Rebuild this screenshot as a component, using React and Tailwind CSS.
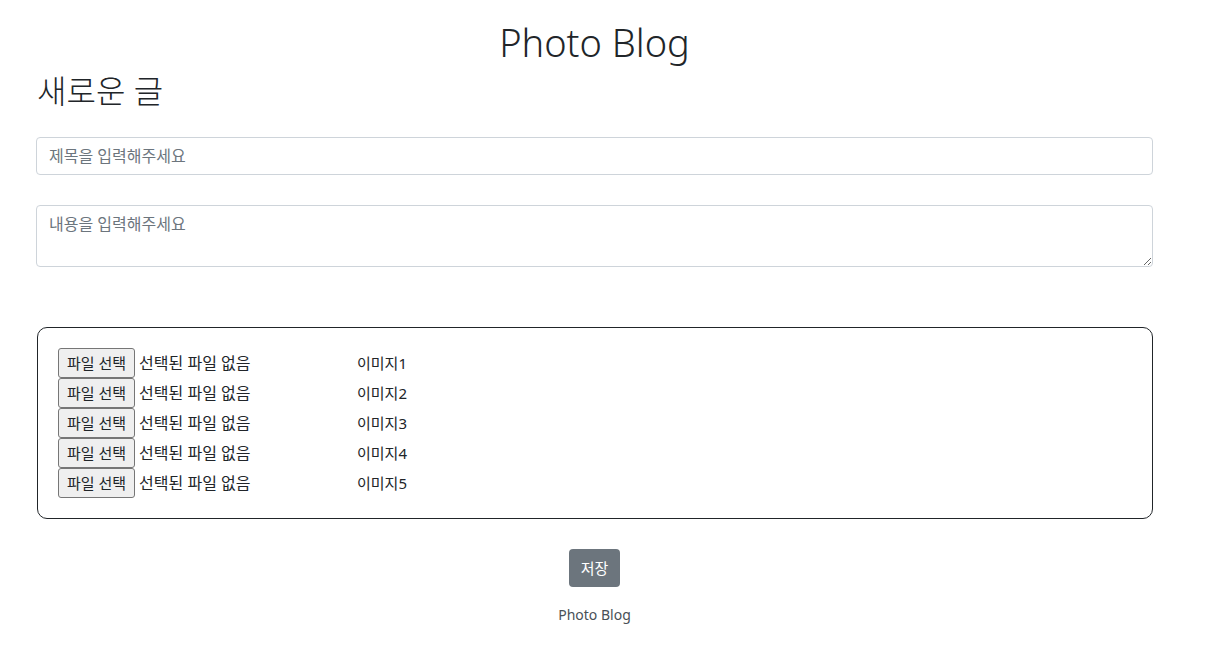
import React from 'react';

function FileRow({ label }) {
	return (
		<div className="flex items-center h-[30px]">
			<div className="w-[299px] flex items-center shrink-0">
				<button className="h-[30px] px-[8px] border border-[#767676] rounded-[3px] bg-[#efefef] text-[15px] text-[#212529]">
					파일 선택
				</button>
				<span className="ml-[4px] text-[16px] text-[#212529]">선택된 파일 없음</span>
			</div>
			<span className="text-[15px] text-[#212529]">{label}</span>
		</div>
	);
}

export default function App() {
	const images = ['이미지1', '이미지2', '이미지3', '이미지4', '이미지5'];

	return (
		<div className="bg-white min-h-[658px] text-[#212529]" style={{ fontFamily: '"Noto Sans", "Noto Sans CJK KR", sans-serif' }}>
			<div className="w-[1117px] ml-[36px]">
				<h1 className="text-center text-[38px] font-light leading-[48px] pt-[18px]">Photo Blog</h1>
				<h2 className="ml-[1px] text-[32px] font-light leading-[38px] mt-[6px]">새로운 글</h2>

				<input
					className="block w-full mt-[27px] h-[38px] px-[12px] border border-[#ced4da] rounded-[4px] text-[16px] placeholder:text-[#6c757d] outline-none"
					placeholder="제목을 입력해주세요"
				/>
				<textarea
					rows={2}
					className="block w-full mt-[30px] h-[62px] px-[12px] py-[6px] border border-[#ced4da] rounded-[4px] text-[16px] leading-[24px] placeholder:text-[#6c757d] outline-none"
					placeholder="내용을 입력해주세요"
				/>

				<div className="mt-[60px] ml-[1px] border border-[#212529] rounded-[10px] px-[20px] py-[20px]">
					{images.map((img) => (
						<FileRow key={img} label={img} />
					))}
				</div>

				<div className="flex justify-center mt-[30px]">
					<button className="h-[38px] px-[12px] bg-[#6c757d] text-white rounded-[4px] text-[15px]">저장</button>
				</div>
				<p className="text-center text-[14px] text-[#495057] mt-[17px]">Photo Blog</p>
			</div>
		</div>
	);
}
